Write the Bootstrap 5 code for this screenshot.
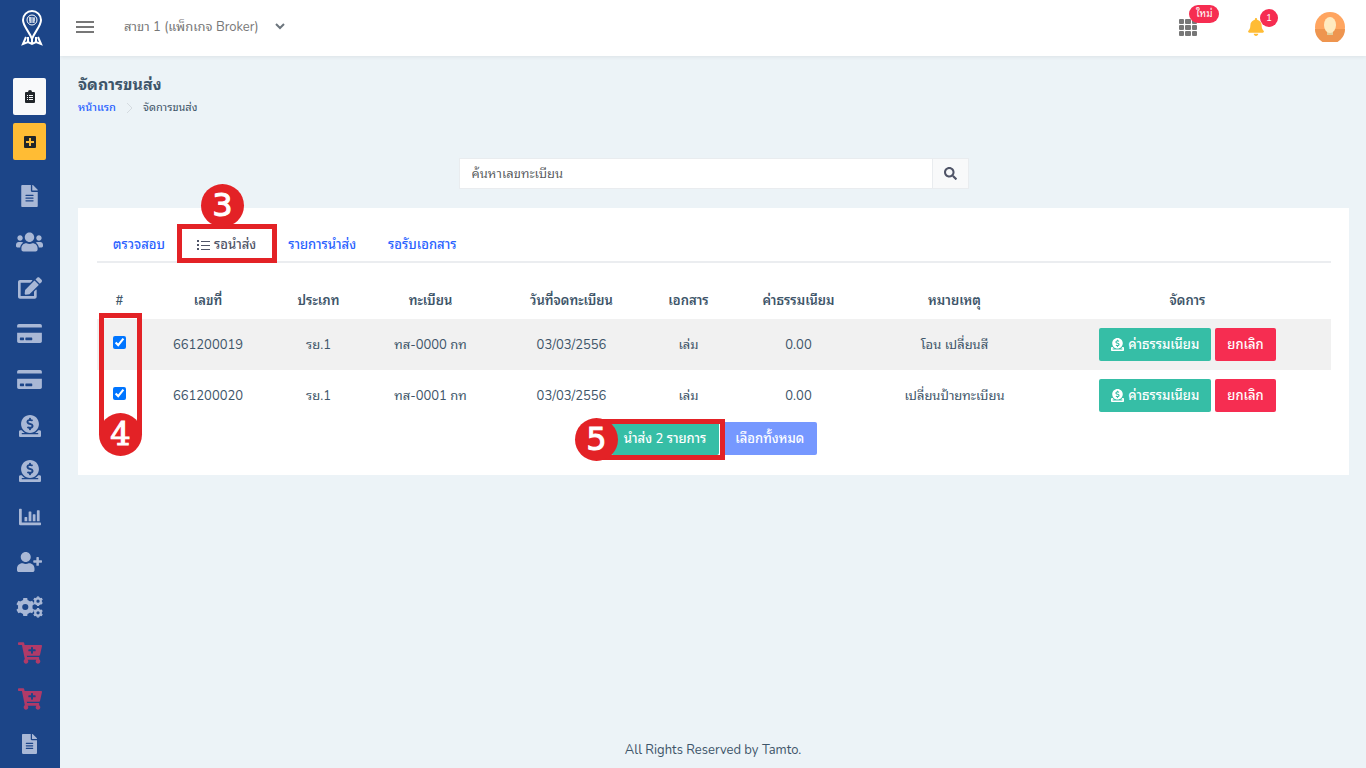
<!DOCTYPE html>
<html lang="th">
<head>
<meta charset="utf-8">
<meta name="viewport" content="width=device-width, initial-scale=1">
<title>จัดการขนส่ง</title>
<link href="https://cdn.jsdelivr.net/npm/bootstrap@5.3.0/dist/css/bootstrap.min.css" rel="stylesheet">
<style>
  body { font-family: Nunito, "Noto Sans Thai Looped", "Noto Sans", sans-serif; font-size: 13px; line-height: 20px; color: #3e5569; background: #ecf3f7; }
  a { text-decoration: none; color: #2962ff; }
  svg { display: block; fill: currentColor; }
  .side { width: 60px; background: #1c4588; height: 100vh; min-height: 720px; padding: 0 1px 2px 0; }
  .brand-link { height: 56px; color: #fff; }
  .side .btn { width: 33px; height: 37px; border-radius: 2px; padding: 0; border: 0; color: #212529; }
  .side .btn-plus { background: #ffbc34; }
  .quick { padding-top: 22px; }
  .side-menu { padding-top: 13px; }
  .side-menu a { color: #a9b8d6; }
  .side-menu .buy { color: #b03a68; }
  .topbar { height: 56px; background: #fff; box-shadow: 0 1px 4px rgba(0,0,0,.07); padding: 0 21px 2px 0; }
  .branch { border: 0; background-color: transparent; color: #777; font: inherit; width: 140px; appearance: none; padding: 0; }
  .branch-label { margin-left: 30px; }
  .plain-btn { border: 0; background: none; padding: 0; color: #777; }
  .bell-btn { color: #ffbc34; }
  .top-tools { gap: 51px; }
  .note-pill { background: #f62d51; color: #fff; font-size: 10px; line-height: 18px; border-radius: 9px; padding: 0 7px; position: absolute; left: 10px; top: -14px; }
  .note-count { left: 12px; top: -9px; padding: 0 6px; }
  .content { padding: 18px 17px 0 18px; }
  .page-head h1 { font-size: 16px; line-height: 22px; font-weight: 700; margin: 0; }
  .crumbs { font-size: 11px; line-height: 18px; margin: 3px 0 0; gap: 10px; }
  .crumbs a { font-weight: 500; }
  .search-box { width: 510px; max-width: 100%; margin: 41px auto 19px; }
  .search-box .form-control { font-size: 13px; line-height: 20px; padding: 5px 12px; border-color: #e9ecef; border-radius: 0; height: 31px; min-height: 31px; }
  .search-box .btn { border: 1px solid #e9ecef; border-radius: 0; background: #f8f9fa; width: 37px; padding: 0 11px; color: #4f5467; }
  .panel { background: #fff; padding: 17px 18px 20px 19px; }
  .nav-tabs { border-bottom: 2px solid #ebedf0; }
  .nav-tabs .nav-link { border: 0; color: #2962ff; padding: 10px 16px 7px; line-height: 20px; font-weight: 500; }
  .nav-tabs .nav-link.active { color: #4f5467; background: none; }
  .data { table-layout: fixed; text-align: center; margin: 17px 0 0; --bs-table-striped-bg: #f1f1f1; --bs-table-color: #3e5569; --bs-table-striped-color: #3e5569; color: #3e5569; }
  .data th { padding: 10px 0 7px; border: 0; font-weight: 600; line-height: 22px; }
  .data td { padding: 9px 0 8px; border: 0; line-height: 34px; height: 51px; }
  .data input { accent-color: #0075ff; width: 13px; height: 13px; vertical-align: middle; margin: 0 0 6px; }
  .act { font-size: 13px; line-height: 20px; height: 33px; padding: 0 12px; border: 0; border-radius: 2px; color: #fff; font-weight: 500; }
  .teal { background: #36bea6; } .red { background: #f62d51; } .periwinkle { background: #7698ff; }
  .teal:hover, .red:hover, .periwinkle:hover { color: #fff; }
  .bulk { padding-top: 1px; gap: 3px; }
  .bulk .act { padding: 0 13px; }
  .frame { position: absolute; border: 5px solid #e32226; pointer-events: none; z-index: 2; }
  .step-dot { position: absolute; width: 43px; height: 43px; border-radius: 50%; background: #e32226; color: #fff; font: 32px/43px "DejaVu Sans", sans-serif; -webkit-text-stroke: 1px #fff; text-align: center; z-index: 3; }
  .frame-tab { inset: -1px -5px -2px -4px; } .dot-tab { left: 20px; top: -41px; }
  .frame-checks { left: 2px; top: 33px; width: 43px; height: 122px; } .dot-checks { left: 2px; top: 133px; font-family: "DejaVu Serif", serif; }
  .frame-send { inset: -3px -6px -5px -12px; } .dot-send { left: -36px; top: -4px; }
  .w1{width:45px}.w2{width:132px}.w3{width:89px}.w4{width:135px}.w5{width:147px}.w6{width:87px}.w7{width:133px}.w8{width:179px}.w9{width:287px}
</style>
</head>
<body>
<svg width="0" height="0" class="position-absolute" aria-hidden="true">
  <symbol id="file" viewBox="0 0 384 512"><path d="M224 136V0H24C10.700 0 0 10.700 0 24v464c0 13.300 10.700 24 24 24h336c13.300 0 24-10.700 24-24V160H248c-13.200 0-24-10.800-24-24zm64 236c0 6.600-5.400 12-12 12H108c-6.600 0-12-5.400-12-12v-8c0-6.600 5.400-12 12-12h168c6.600 0 12 5.400 12 12v8zm0-64c0 6.600-5.400 12-12 12H108c-6.600 0-12-5.400-12-12v-8c0-6.600 5.400-12 12-12h168c6.600 0 12 5.400 12 12v8zm0-72v8c0 6.600-5.400 12-12 12H108c-6.600 0-12-5.400-12-12v-8c0-6.600 5.400-12 12-12h168c6.600 0 12 5.400 12 12zm96-114.100v6.100H256V0h6.100c6.400 0 12.500 2.500 17 7l97.900 98c4.500 4.500 7 10.600 7 16.900z"/></symbol>
  <symbol id="users" viewBox="0 0 640 512"><path d="M96 224c35.300 0 64-28.700 64-64s-28.700-64-64-64-64 28.700-64 64 28.700 64 64 64zm448 0c35.300 0 64-28.700 64-64s-28.700-64-64-64-64 28.700-64 64 28.700 64 64 64zm32 32h-64c-17.600 0-33.500 7.100-45.100 18.600 40.300 22.100 68.900 62 75.100 109.400h66c17.700 0 32-14.300 32-32v-32c0-35.300-28.700-64-64-64zm-256 0c61.900 0 112-50.100 112-112S381.900 32 320 32 208 82.100 208 144s50.100 112 112 112zm76.800 32h-8.300c-20.800 10-43.900 16-68.500 16s-47.600-6-68.500-16h-8.300C179.600 288 128 339.600 128 403.200V432c0 26.500 21.500 48 48 48h288c26.500 0 48-21.500 48-48v-28.800c0-63.600-51.600-115.200-115.200-115.200zm-223.700-13.400C161.500 263.100 145.600 256 128 256H64c-35.300 0-64 28.700-64 64v32c0 17.700 14.300 32 32 32h65.900c6.300-47.400 34.900-87.300 75.200-109.400z"/></symbol>
  <symbol id="edit" viewBox="0 0 576 512"><path d="M402.600 83.200l90.200 90.200c3.800 3.800 3.800 10 0 13.800L274.400 405.600l-92.800 10.300c-12.400 1.400-22.900-9.100-21.500-21.500l10.300-92.800L388.800 83.200c3.800-3.800 10-3.800 13.800 0zm162-22.900l-48.800-48.800c-15.200-15.200-39.900-15.200-55.200 0l-35.400 35.400c-3.800 3.800-3.800 10 0 13.800l90.200 90.200c3.800 3.800 10 3.800 13.800 0l35.400-35.400c15.200-15.300 15.200-40 0-55.200zM384 346.200V448H64V128h229.800c3.200 0 6.200-1.300 8.500-3.500l40-40c7.600-7.600 2.200-20.500-8.500-20.500H48C21.500 64 0 85.500 0 112v352c0 26.500 21.500 48 48 48h352c26.500 0 48-21.500 48-48V306.200c0-10.700-12.900-16-20.500-8.500l-40 40c-2.200 2.300-3.500 5.300-3.500 8.500z"/></symbol>
  <symbol id="card-ic" viewBox="0 0 576 512"><path d="M0 424c0 22 18 40 40 40h496c22 0 40-18 40-40V224H0v200zm192-72c0-6.600 5.400-12 12-12h136c6.600 0 12 5.400 12 12v36c0 6.600-5.400 12-12 12H204c-6.600 0-12-5.400-12-12v-36zm-128 0c0-6.600 5.400-12 12-12h72c6.600 0 12 5.400 12 12v36c0 6.600-5.400 12-12 12H76c-6.600 0-12-5.400-12-12v-36zM576 64v40H0V64c0-22 18-40 40-40h496c22 0 40 18 40 40z"/></symbol>
  <symbol id="donate" viewBox="0 0 512 512"><path d="M256 416c114.900 0 208-93.100 208-208S370.900 0 256 0 48 93.100 48 208s93.100 208 208 208zM233.800 97.400V80.600c0-9.200 7.400-16.600 16.600-16.600h11.100c9.200 0 16.600 7.400 16.600 16.600v17c15.500.8 30.500 6.100 43 15.400 5.600 4.100 6.200 12.300 1.200 17.100L306 145.600c-3.800 3.700-9.500 3.800-14 1-5.400-3.400-11.400-5.100-17.800-5.100h-38.900c-9 0-16.300 8.200-16.300 18.300 0 8.200 5 15.500 12.100 17.600l62.300 18.700c25.700 7.700 43.700 32.400 43.700 60.100 0 34-26.400 61.500-59.100 62.400v16.800c0 9.200-7.400 16.600-16.600 16.600h-11.100c-9.200 0-16.600-7.400-16.600-16.600v-17c-15.500-.8-30.500-6.100-43-15.400-5.600-4.100-6.200-12.300-1.200-17.100l16.300-15.500c3.800-3.700 9.500-3.800 14-1 5.400 3.400 11.400 5.100 17.800 5.100h38.900c9 0 16.300-8.200 16.300-18.300 0-8.200-5-15.500-12.100-17.600l-62.300-18.700c-25.700-7.700-43.700-32.400-43.700-60.100.1-34 26.400-61.500 59.100-62.400zM480 352h-32.500c-19.600 26-44.600 47.700-73 64h63.800c5.300 0 9.600 3.600 9.600 8v16c0 4.400-4.300 8-9.600 8H73.600c-5.300 0-9.600-3.600-9.600-8v-16c0-4.400 4.300-8 9.600-8h63.800c-28.400-16.300-53.300-38-73-64H32c-17.700 0-32 14.300-32 32v96c0 17.700 14.300 32 32 32h448c17.700 0 32-14.300 32-32v-96c0-17.700-14.300-32-32-32z"/></symbol>
  <symbol id="chart" viewBox="0 0 512 512"><path d="M16 64h32q16 0 16 16v304h432q16 0 16 16v32q0 16-16 16H32q-32 0-32-32V80q0-16 16-16zM128 268q0-12 12-12h40q12 0 12 12v84h-64zM224 140q0-12 12-12h40q12 0 12 12v212h-64zM320 204q0-12 12-12h40q12 0 12 12v148h-64zM416 108q0-12 12-12h40q12 0 12 12v244h-64z"/></symbol>
  <symbol id="user-plus" viewBox="0 0 640 512"><path d="M624 208h-64v-64c0-8.800-7.200-16-16-16h-32c-8.800 0-16 7.200-16 16v64h-64c-8.800 0-16 7.200-16 16v32c0 8.800 7.200 16 16 16h64v64c0 8.800 7.200 16 16 16h32c8.800 0 16-7.200 16-16v-64h64c8.800 0 16-7.200 16-16v-32c0-8.800-7.200-16-16-16zm-400 48c70.700 0 128-57.300 128-128S294.700 0 224 0 96 57.300 96 128s57.300 128 128 128zm89.600 32h-16.700c-22.200 10.200-46.900 16-72.900 16s-50.600-5.800-72.900-16h-16.700C60.200 288 0 348.200 0 422.400V464c0 26.500 21.500 48 48 48h352c26.500 0 48-21.500 48-48v-41.600c0-74.200-60.200-134.400-134.400-134.400z"/></symbol>
  <symbol id="gear" viewBox="-100 -100 200 200"><circle r="56" fill="none" stroke="currentColor" stroke-width="46"/><g><path id="tooth" d="M-26-68l5-30h42l5 30z"/><use href="#tooth" transform="rotate(60)"/><use href="#tooth" transform="rotate(120)"/><use href="#tooth" transform="rotate(180)"/><use href="#tooth" transform="rotate(240)"/><use href="#tooth" transform="rotate(300)"/></g></symbol>
  <symbol id="cogs" viewBox="0 0 640 512"><use href="#gear" x="0" y="36" width="440" height="440"/><use href="#gear" x="404" y="0" width="236" height="236"/><use href="#gear" x="404" y="276" width="236" height="236"/></symbol>
  <symbol id="cart" viewBox="0 0 576 512"><path d="M504.717 320H211.572l6.545 32h268.418c15.401 0 26.816 14.301 23.403 29.319l-5.517 24.276C523.112 414.668 536 433.828 536 456c0 31.202-25.519 56.444-56.824 55.994-29.823-.429-54.350-24.631-55.155-54.447-.440-16.287 6.085-31.049 16.803-41.548H231.176C241.553 426.165 248 440.326 248 456c0 31.813-26.528 57.431-58.670 55.938-28.540-1.325-51.751-24.385-53.251-52.917-1.158-22.034 10.436-41.455 28.051-51.586L93.883 64H24C10.745 64 0 53.255 0 40V24C0 10.745 10.745 0 24 0h102.529c11.401 0 21.228 8.021 23.513 19.190L159.208 64H551.990c15.401 0 26.816 14.301 23.403 29.319l-47.273 208C525.637 312.246 515.923 320 504.717 320zM408 168h-48v-40c0-8.837-7.163-16-16-16h-16c-8.837 0-16 7.163-16 16v40h-48c-8.837 0-16 7.163-16 16v16c0 8.837 7.163 16 16 16h48v40c0 8.837 7.163 16 16 16h16c8.837 0 16-7.163 16-16v-40h48c8.837 0 16-7.163 16-16v-16c0-8.837-7.163-16-16-16z"/></symbol>
</svg>

<div class="d-flex">
  <aside class="side d-flex flex-column flex-shrink-0 sticky-top">
    <a href="#" class="brand-link d-flex align-items-center justify-content-center ps-1" aria-label="Tamto">
      <svg width="22" height="38" viewBox="0 0 22 38" fill="none" stroke="currentColor"><path fill="none" stroke-width="2" d="M11 30C8 22 2 17 2 11a9 9 0 0 1 18 0c0 6-6 11-9 19z"/><circle cx="11" cy="11" r="5" fill="none" stroke-width="1"/><path fill="none" stroke-width="1" d="M8 9h6M8 11h6M9 13h4M9 8v6M13 9v5"/><path fill="none" stroke-width="2" d="M5 28L2 35l5-2 4 2 4-2 5 2-3-7M7 28v5M15 28v5M11 29v5"/></svg>
    </a>
    <div class="quick d-flex flex-column align-items-center gap-2">
      <button class="btn btn-light d-flex align-items-center justify-content-center" aria-label="รายการ"><svg width="10" height="13" viewBox="0 0 10 13"><path fill-rule="evenodd" d="M1 2h2a2 2 0 0 1 4 0h2q1 0 1 1v9q0 1-1 1H1q-1 0-1-1V3q0-1 1-1zm1 3v1h1V5zm2 0v1h4V5zM2 7v1h1V7zm2 0v1h4V7zM2 9v1h1V9zm2 0v1h4V9z"/></svg></button>
      <button class="btn btn-plus d-flex align-items-center justify-content-center" aria-label="เพิ่ม"><svg width="12" height="12" viewBox="0 0 12 12"><path fill-rule="evenodd" d="M1 0h10q1 0 1 1v10q0 1-1 1H1q-1 0-1-1V1q0-1 1-1zm4 2v3H2v2h3v3h2V7h3V5H7V2z"/></svg></button>
    </div>
    <nav class="side-menu d-flex flex-column flex-fill">
      <a href="#" aria-label="เอกสาร" class="flex-fill d-flex align-items-center justify-content-center"><svg width="17" height="22"><use href="#file"/></svg></a>
      <a href="#" aria-label="ลูกค้า" class="flex-fill d-flex align-items-center justify-content-center"><svg width="27" height="22"><use href="#users"/></svg></a>
      <a href="#" aria-label="แก้ไข" class="flex-fill d-flex align-items-center justify-content-center"><svg width="24" height="22"><use href="#edit"/></svg></a>
      <a href="#" aria-label="บัตร" class="flex-fill d-flex align-items-center justify-content-center"><svg width="25" height="22"><use href="#card-ic"/></svg></a>
      <a href="#" aria-label="ชำระเงิน" class="flex-fill d-flex align-items-center justify-content-center"><svg width="25" height="22"><use href="#card-ic"/></svg></a>
      <a href="#" aria-label="รายรับ" class="flex-fill d-flex align-items-center justify-content-center"><svg width="22" height="22"><use href="#donate"/></svg></a>
      <a href="#" aria-label="รายจ่าย" class="flex-fill d-flex align-items-center justify-content-center"><svg width="22" height="22"><use href="#donate"/></svg></a>
      <a href="#" aria-label="รายงาน" class="flex-fill d-flex align-items-center justify-content-center"><svg width="22" height="22"><use href="#chart"/></svg></a>
      <a href="#" aria-label="เพิ่มผู้ใช้" class="flex-fill d-flex align-items-center justify-content-center"><svg width="27" height="20"><use href="#user-plus"/></svg></a>
      <a href="#" aria-label="ตั้งค่า" class="flex-fill d-flex align-items-center justify-content-center"><svg width="27" height="22"><use href="#cogs"/></svg></a>
      <a href="#" aria-label="สั่งซื้อ" class="buy flex-fill d-flex align-items-center justify-content-center"><svg width="24" height="22"><use href="#cart"/></svg></a>
      <a href="#" aria-label="สั่งซื้อเพิ่ม" class="buy flex-fill d-flex align-items-center justify-content-center"><svg width="24" height="22"><use href="#cart"/></svg></a>
      <a href="#" aria-label="คู่มือ" class="flex-fill d-flex align-items-center justify-content-center"><svg width="17" height="20"><use href="#file"/></svg></a>
    </nav>
  </aside>

  <div class="flex-grow-1 d-flex flex-column min-vh-100" style="min-width:0">
    <header class="topbar d-flex align-items-center">
      <button class="plain-btn ms-3" aria-label="เมนู"><svg width="18" height="12" viewBox="0 0 18 12"><path d="M0 0h18v2H0zM0 5h18v2H0zM0 10h18v2H0z"/></svg></button>
      <label class="branch-label d-flex align-items-center">
        <select class="branch" aria-label="สาขา"><option>สาขา 1 (แพ็กเกจ Broker)</option></select>
        <svg class="ms-2 text-secondary" width="16" height="8" viewBox="0 0 16 8"><path d="M4 1l4 4 4-4" fill="none" stroke="currentColor" stroke-width="2"/></svg>
      </label>
      <div class="top-tools ms-auto d-flex align-items-center">
        <button class="plain-btn position-relative" aria-label="แอป"><svg width="18" height="17" viewBox="0 0 18 17"><g id="trio"><rect width="5" height="5" rx="1"/><rect x="6" width="6" height="5" rx="1"/><rect x="13" width="5" height="5" rx="1"/></g><use href="#trio" y="6"/><use href="#trio" y="12"/></svg><span class="note-pill">ใหม่</span></button>
        <button class="plain-btn bell-btn position-relative" aria-label="แจ้งเตือน"><svg width="16" height="18" viewBox="0 0 448 512"><path d="M224 512c35.320 0 63.970-28.650 63.970-64H160.030c0 35.350 28.650 64 63.970 64zm215.390-149.710c-19.320-20.760-55.470-51.990-55.470-154.290 0-77.700-54.480-139.900-127.940-155.160V32c0-17.670-14.320-32-31.980-32s-31.980 14.330-31.980 32v20.840C118.560 68.100 64.080 130.300 64.080 208c0 102.300-36.150 133.530-55.470 154.290-6 6.450-8.660 14.160-8.610 21.710.11 16.400 12.980 32 32.100 32h383.800c19.120 0 32-15.600 32.100-32 .05-7.550-2.610-15.270-8.610-21.710z"/></svg><span class="note-pill note-count">1</span></button>
        <button class="plain-btn" aria-label="บัญชี"><svg width="30" height="30" viewBox="0 0 30 30"><circle cx="15" cy="15" r="15" fill="#ffa560"/><path d="M0 17h30a15 15 0 0 1-30 0z" fill="#ee954f"/><path d="M12 18h6v5h-6z" fill="#e2cf9b"/><ellipse cx="15" cy="13" rx="6" ry="8" fill="#ffeac0"/></svg></button>
      </div>
    </header>

    <main class="content flex-grow-1">
      <div class="page-head">
        <h1>จัดการขนส่ง</h1>
        <nav class="crumbs d-flex align-items-center"><a href="#">หน้าแรก</a><svg width="7" height="10" viewBox="0 0 7 10"><path d="M1 0l5 5-5 5" fill="none" stroke="#d5dbe0"/></svg><span>จัดการขนส่ง</span></nav>
      </div>
      <form class="search-box input-group">
        <input class="form-control" type="search" placeholder="ค้นหาเลขทะเบียน" aria-label="ค้นหาเลขทะเบียน">
        <button class="btn" type="button" aria-label="ค้นหา"><svg width="13" height="13" viewBox="0 0 512 512"><path d="M505 442.700L405.300 343c-4.500-4.500-10.600-7-17-7H372c27.600-35.300 44-79.700 44-128C416 93.100 322.900 0 208 0S0 93.100 0 208s93.100 208 208 208c48.300 0 92.700-16.400 128-44v16.300c0 6.400 2.500 12.500 7 17l99.700 99.700c9.400 9.400 24.600 9.400 33.900 0l28.300-28.300c9.400-9.400 9.400-24.600.1-34zM208 336c-70.700 0-128-57.200-128-128 0-70.700 57.200-128 128-128 70.700 0 128 57.200 128 128 0 70.700-57.200 128-128 128z"/></svg></button>
      </form>

      <section class="panel">
        <ul class="nav nav-tabs">
          <li class="nav-item"><a class="nav-link" href="#">ตรวจสอบ</a></li>
          <li class="nav-item position-relative"><a class="nav-link active d-flex align-items-center gap-1" href="#"><svg width="13" height="10" viewBox="0 0 13 10"><path d="M0 0h2v2H0zM0 4h2v2H0zM0 8h2v2H0zM4 1h9v1H4zM4 5h9v1H4zM4 9h9v1H4z"/></svg>รอนำส่ง</a><span class="frame frame-tab"></span><span class="step-dot dot-tab">3</span></li>
          <li class="nav-item"><a class="nav-link" href="#">รายการนำส่ง</a></li>
          <li class="nav-item"><a class="nav-link" href="#">รอรับเอกสาร</a></li>
        </ul>
        <div class="position-relative">
          <table class="table table-striped data">
            <colgroup><col class="w1"><col class="w2"><col class="w3"><col class="w4"><col class="w5"><col class="w6"><col class="w7"><col class="w8"><col class="w9"></colgroup>
            <thead><tr><th>#</th><th>เลขที่</th><th>ประเภท</th><th>ทะเบียน</th><th>วันที่จดทะเบียน</th><th>เอกสาร</th><th>ค่าธรรมเนียม</th><th>หมายเหตุ</th><th>จัดการ</th></tr></thead>
            <tbody>
              <tr><td><input type="checkbox" checked aria-label="661200019"></td><td>661200019</td><td>รย.1</td><td>ทส-0000 กท</td><td>03/03/2556</td><td>เล่ม</td><td>0.00</td><td>โอน เปลี่ยนสี</td>
                <td><div class="d-flex justify-content-center gap-1"><button class="btn act teal d-flex align-items-center gap-1"><svg width="13" height="13"><use href="#donate"/></svg>ค่าธรรมเนียม</button><button class="btn act red">ยกเลิก</button></div></td></tr>
              <tr><td><input type="checkbox" checked aria-label="661200020"></td><td>661200020</td><td>รย.1</td><td>ทส-0001 กท</td><td>03/03/2556</td><td>เล่ม</td><td>0.00</td><td>เปลี่ยนป้ายทะเบียน</td>
                <td><div class="d-flex justify-content-center gap-1"><button class="btn act teal d-flex align-items-center gap-1"><svg width="13" height="13"><use href="#donate"/></svg>ค่าธรรมเนียม</button><button class="btn act red">ยกเลิก</button></div></td></tr>
            </tbody>
          </table>
          <span class="frame frame-checks"></span><span class="step-dot dot-checks">4</span>
        </div>
        <div class="bulk d-flex justify-content-center">
          <div class="position-relative"><button class="btn act teal">นำส่ง 2 รายการ</button><span class="frame frame-send"></span><span class="step-dot dot-send">5</span></div>
          <button class="btn act periwinkle">เลือกทั้งหมด</button>
        </div>
      </section>
    </main>
    <footer class="text-center pb-2">All Rights Reserved by Tamto.</footer>
  </div>
</div>
<script src="https://cdn.jsdelivr.net/npm/bootstrap@5.3.0/dist/js/bootstrap.bundle.min.js"></script>
</body>
</html>
